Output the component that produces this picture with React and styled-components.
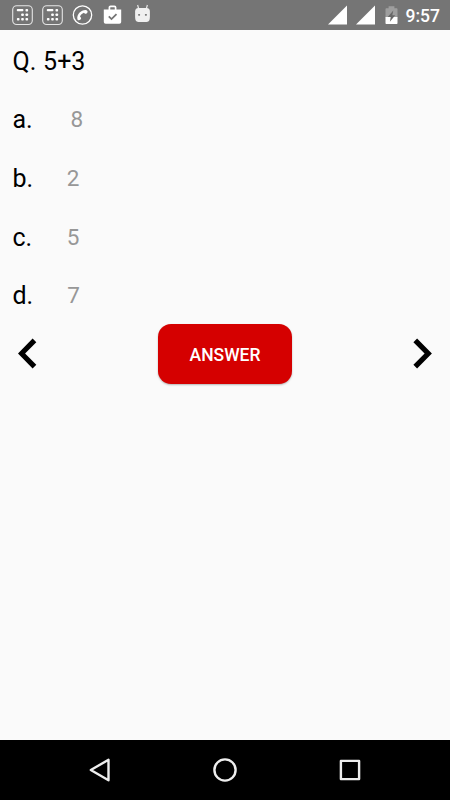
import React from "react";
import styled, { createGlobalStyle } from "styled-components";

const GlobalStyle = createGlobalStyle`
	body {
		margin: 0;
		background: #fafafa;
	}
`;

const Screen = styled.div`
	display: flex;
	flex-direction: column;
	width: 450px;
	height: 800px;
	overflow: hidden;
	background: #fafafa;
	font-family: Roboto, "Noto Sans", sans-serif;
	color: #000;
`;

const StatusBar = styled.header`
	display: flex;
	align-items: center;
	justify-content: space-between;
	box-sizing: border-box;
	height: 30px;
	padding: 0 10px 0 12px;
	background: #757575;
	color: #fff;
`;

const Notifications = styled.div`
	display: flex;
	align-items: center;
	gap: 9px;
`;

const SystemIcons = styled.div`
	display: flex;
	align-items: center;
`;

const Icon = styled.svg`
	display: block;
	flex: none;
	margin-left: ${({ $left }) => $left || 0}px;
`;

const Clock = styled.span`
	margin-left: 8px;
	font-size: 17.5px;
	font-weight: 500;
	line-height: 20px;
	padding-top: 2px;
`;

const Content = styled.main`
	flex: 1;
	padding: 2.5px 12.5px 0;
`;

const Row = styled.div`
	display: flex;
	height: 58.7px;
	line-height: 58.7px;
	font-size: 25px;
	white-space: pre;
	word-spacing: 0.6px;
`;

const Letter = styled.span`
	width: ${({ $width }) => $width}px;
`;

const Option = styled.span`
	font-size: 22.5px;
	line-height: 56.7px;
	color: #979797;
`;

const Controls = styled.div`
	display: flex;
	align-items: flex-start;
	justify-content: space-between;
	margin: -2.3px -1px 0 -1px;
`;

const ArrowButton = styled.button`
	display: flex;
	padding: 14px 6px 0;
	border: 0;
	background: none;
`;

const AnswerButton = styled.button`
	width: 134px;
	height: 60px;
	padding: 2px 0 0;
	border: 0;
	border-radius: 13px;
	background: #d50000;
	box-shadow: 0 1px 2px rgba(0, 0, 0, 0.28);
	font-family: inherit;
	font-size: 17.5px;
	font-weight: 500;
	color: #fff;
`;

const NavBar = styled.footer`
	display: flex;
	align-items: center;
	justify-content: space-between;
	box-sizing: border-box;
	height: 60px;
	padding: 0 87px 0 87px;
	background: #000;
`;

const KeyboardIcon = () => (
	<Icon width="21" height="22" viewBox="0 0 21 22">
		<rect x="0.7" y="1.7" width="19.6" height="18.8" rx="4" fill="none" stroke="#e6e6e6" strokeWidth="1.1" />
		<g fill="#fff">
			<rect x="4.8" y="5" width="6.6" height="2.3" rx="0.8" />
			<rect x="13.5" y="5" width="2.6" height="2.5" rx="0.8" />
			<rect x="9.2" y="9.5" width="2.6" height="2.6" rx="0.8" />
			<rect x="13.5" y="9.5" width="2.6" height="2.6" rx="0.8" />
			<rect x="4.9" y="14" width="2.6" height="2.6" rx="0.8" />
			<rect x="9.2" y="14" width="2.6" height="2.6" rx="0.8" />
			<rect x="13.5" y="14" width="2.6" height="2.6" rx="0.8" />
		</g>
	</Icon>
);

const PhoneIcon = () => (
	<Icon width="21" height="22" viewBox="0 0 21 22">
		<circle cx="10.5" cy="11" r="9.2" fill="none" stroke="#fff" strokeWidth="1.3" />
		<path
			d="M5.4 15.2c-.9-4.6 3.5-9.2 8.3-9.1.5 0 1.2.3 1.6.8.6.8.2 1.6-.5 2.3-.7.6-1.5.8-2.1.3l-.8-.8c-1.9.7-3.2 2-3.9 3.8l.8.9c.6.7.3 1.4-.3 2.1-.7.7-2.6 1.2-3.1-.3z"
			fill="#fff"
		/>
	</Icon>
);

const BagIcon = () => (
	<Icon width="21" height="22" viewBox="0 0 21 22">
		<path d="M7.4 6V3.6c0-.8.5-1.2 1.2-1.2h3.8c.7 0 1.2.4 1.2 1.2V6" fill="none" stroke="#fff" strokeWidth="1.7" />
		<path d="M1.8 5.5h17.4v12.2c0 1.2-.8 2-1.9 2H3.7c-1.1 0-1.9-.8-1.9-2z" fill="#fff" />
		<path d="m6.8 12.4 2.7 2.7 5-5" fill="none" stroke="#757575" strokeWidth="1.8" />
	</Icon>
);

const DroidIcon = () => (
	<Icon width="21" height="22" viewBox="0 0 21 22">
		<path d="m5.6 1 1.2 4M15.4 1l-1.2 4" stroke="#e6e6e6" strokeWidth="1.2" />
		<path
			d="M3.1 7.4c0-2 1.2-3.3 3.2-3.3h8.4c2 0 3.2 1.3 3.2 3.3v5.4c-.1 2.9-.6 5.2-3.3 5.2H6.4c-2.7 0-3.2-2.3-3.3-5.2z"
			fill="#f0f0f0"
		/>
		<rect x="6.1" y="9.9" width="2" height="1.8" rx="0.6" fill="#757575" />
		<rect x="12.9" y="9.9" width="2" height="1.8" rx="0.6" fill="#757575" />
	</Icon>
);

const SignalIcon = ({ $left }) => (
	<Icon $left={$left} width="19" height="20" viewBox="0 0 19 20">
		<path d="M19 .5v19H0z" fill="#fff" />
	</Icon>
);

const BatteryIcon = () => (
	<Icon $left={10} width="13" height="20" viewBox="0 0 13 20">
		<path d="M3.6 1.2h5.8v2h2.1c.6 0 1 .4 1 1v8.2H.5V4.2c0-.6.4-1 1-1h2.1z" fill="#9e9e9e" />
		<path d="M.5 12.1h12v6c0 .6-.4 1-1 1h-10c-.6 0-1-.4-1-1z" fill="#fff" />
		<path d="M8.3 5.5 2.7 12h3l-.8 4.800 5.300-6.600H7.300z" fill="#686868" />
	</Icon>
);

const Chevron = ({ right }) => (
	<Icon width="20" height="31" viewBox="0.9 0 20 31">
		<path
			d={right ? "M5 .5 19.8 15.5 5 30.5l-3.7-3.7L12.5 15.5 1.3 4.2z" : "M15.5.5.9 15.5l14.6 15 3.7-3.7L8 15.5 19.2 4.2z"}
			fill="#000"
		/>
	</Icon>
);

const options = [
	{ letter: "a.", value: "8", width: 58 },
	{ letter: "b.", value: "2", width: 54.2 },
	{ letter: "c.", value: "5", width: 54.2 },
	{ letter: "d.", value: "7", width: 54.8 },
];

const App = () => {
	return (
		<Screen>
			<GlobalStyle />
			<StatusBar>
				<Notifications>
					<KeyboardIcon />
					<KeyboardIcon />
					<PhoneIcon />
					<BagIcon />
					<DroidIcon />
				</Notifications>
				<SystemIcons>
					<SignalIcon />
					<SignalIcon $left={9} />
					<BatteryIcon />
					<Clock>9:57</Clock>
				</SystemIcons>
			</StatusBar>
			<Content>
				<Row>Q. 5+3</Row>
				{options.map(({ letter, value, width }) => (
					<Row key={letter}>
						<Letter $width={width}>{letter}</Letter>
						<Option>{value}</Option>
					</Row>
				))}
				<Controls>
					<ArrowButton aria-label="Previous">
						<Chevron />
					</ArrowButton>
					<AnswerButton>ANSWER</AnswerButton>
					<ArrowButton aria-label="Next">
						<Chevron right />
					</ArrowButton>
				</Controls>
			</Content>
			<NavBar>
				<Icon width="24" height="26" viewBox="0 0 24 26">
					<path d="M3.8 13 21.5 2.8v20.4z" fill="none" stroke="#eee" strokeWidth="2.4" strokeLinejoin="round" />
				</Icon>
				<Icon $left={2} width="26" height="26" viewBox="0 0 26 26">
					<circle cx="13" cy="13" r="10.6" fill="none" stroke="#eee" strokeWidth="2.4" />
				</Icon>
				<Icon width="26" height="26" viewBox="0 0 26 26">
					<rect x="3.9" y="3.9" width="18.2" height="18.2" fill="none" stroke="#eee" strokeWidth="2.4" strokeLinejoin="round" />
				</Icon>
			</NavBar>
		</Screen>
	);
};

export default App;
